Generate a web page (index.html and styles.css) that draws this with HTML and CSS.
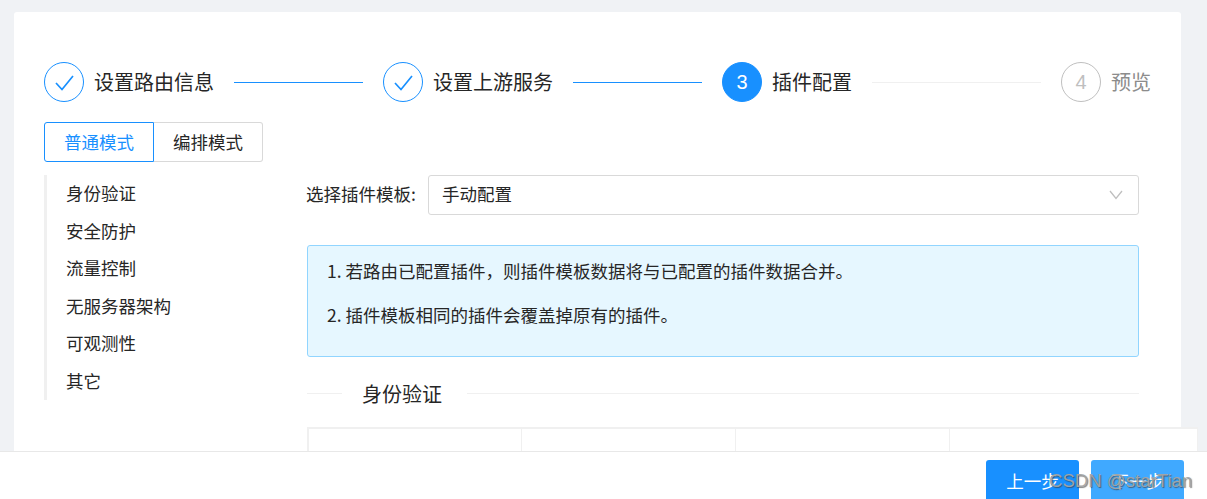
FILE: index.html
```html
<!DOCTYPE html>
<html lang="zh-CN">
<head>
  <meta charset="UTF-8">
  <title>插件配置</title>
  <link rel="stylesheet" href="styles.css">
</head>
<body>
  <div class="card">
    <div class="steps">
      <div class="step">
        <span class="step-icon">
          <svg width="38" height="38" viewBox="0 0 38 38"><path d="M11 20 L17 26.5 L28 13" fill="none" stroke="#1890ff" stroke-width="1.7"/></svg>
        </span>
        <span class="step-title">设置路由信息</span>
        <span class="step-line done"></span>
      </div>
      <div class="step">
        <span class="step-icon">
          <svg width="38" height="38" viewBox="0 0 38 38"><path d="M11 20 L17 26.5 L28 13" fill="none" stroke="#1890ff" stroke-width="1.7"/></svg>
        </span>
        <span class="step-title">设置上游服务</span>
        <span class="step-line done"></span>
      </div>
      <div class="step">
        <span class="step-icon current">3</span>
        <span class="step-title">插件配置</span>
        <span class="step-line"></span>
      </div>
      <div class="step last">
        <span class="step-icon todo">4</span>
        <span class="step-title muted">预览</span>
      </div>
    </div>

    <div class="mode-switch">
      <button class="mode-btn active">普通模式</button>
      <button class="mode-btn">编排模式</button>
    </div>

    <div class="content">
      <ul class="side-nav">
        <li>身份验证</li>
        <li>安全防护</li>
        <li>流量控制</li>
        <li>无服务器架构</li>
        <li>可观测性</li>
        <li>其它</li>
      </ul>
      <div class="main">
        <div class="form-row">
          <label class="form-label">选择插件模板:</label>
          <div class="select">
            <span>手动配置</span>
            <svg width="14" height="10" viewBox="0 0 14 10"><path d="M1 1 L7 8.5 L13 1" fill="none" stroke="#bfbfbf" stroke-width="1.3"/></svg>
          </div>
        </div>
        <div class="alert">
          <ol>
            <li>若路由已配置插件&#xFF0C;则插件模板数据将与已配置的插件数据合并。</li>
            <li>插件模板相同的插件会覆盖掉原有的插件。</li>
          </ol>
        </div>
        <div class="divider"><span>身份验证</span></div>
        <div class="plugin-grid">
          <div class="plugin-cell"></div>
          <div class="plugin-cell"></div>
          <div class="plugin-cell"></div>
          <div class="plugin-cell"></div>
        </div>
      </div>
    </div>
  </div>

  <div class="footer">
    <button class="footer-btn">上一步</button>
    <button class="footer-btn light">下一步</button>
  </div>
  <div class="watermark">CSDN @starTian</div>
</body>
</html>
```

FILE: styles.css
```css
:root {
  --primary: #1890ff;
  --bg: #f0f2f5;
  --text: #262626;
  --line: #f0f0f0;
}
* { box-sizing: border-box; margin: 0; padding: 0; }
html, body { height: 499px; overflow: hidden; }
body {
  position: relative;
  background: var(--bg);
  font-family: "Noto Sans CJK SC", "Liberation Sans", sans-serif;
  font-size: 17.5px;
  color: var(--text);
  padding: 12px 26px 0 14px;
}
.card {
  background: #fff;
  border-radius: 3px;
  height: 487px;
  padding: 50px 30px 0;
}

/* steps */
.steps { display: flex; align-items: center; }
.step { flex: 1; display: flex; align-items: center; }
.step.last { flex: none; }
.step-icon {
  width: 40px;
  height: 40px;
  flex: none;
  border: 1px solid var(--primary);
  border-radius: 50%;
  display: flex;
  align-items: center;
  justify-content: center;
  font-family: "Liberation Sans", sans-serif;
  font-size: 20px;
}
.step-icon.current { background: var(--primary); color: #fff; }
.step-icon.todo { border-color: #bfbfbf; color: #bfbfbf; }
.step-title { margin-left: 10px; font-size: 20px; line-height: 40px; white-space: nowrap; }
.step-title.muted { color: #8c8c8c; }
.step-line { flex: 1; height: 1px; margin: 0 20px; background: var(--line); }
.step-line.done { background: var(--primary); }

/* mode switch */
.mode-switch { display: flex; margin-top: 20px; }
.mode-btn {
  width: 109px;
  height: 40px;
  background: #fff;
  border: 1px solid #d9d9d9;
  border-left: none;
  border-radius: 0 3px 3px 0;
  font: inherit;
  color: var(--text);
  padding-bottom: 2px;
}
.mode-btn.active {
  width: 110px;
  border: 1px solid var(--primary);
  border-radius: 3px 0 0 3px;
  color: var(--primary);
}

/* content */
.content { display: flex; margin-top: 13px; }
.side-nav {
  width: 263px;
  flex: none;
  height: 225px;
  list-style: none;
  position: relative;
  padding-left: 22px;
}
.side-nav::before {
  content: "";
  position: absolute;
  left: 0;
  top: 0;
  bottom: 0;
  width: 3px;
  background: var(--line);
}
.side-nav li { height: 37.5px; line-height: 35.5px; }
.main { width: 832px; flex: none; }
.form-row { display: flex; align-items: center; margin-left: -1px; }
.form-label { width: 122px; flex: none; line-height: 38px; height: 40px; }
.select {
  flex: 1;
  height: 40px;
  border: 1px solid #d9d9d9;
  border-radius: 3px;
  padding: 0 15px 0 14px;
  display: flex;
  align-items: center;
  justify-content: space-between;
}
.select span { line-height: 36px; height: 38px; margin-left: -1px; }
.alert {
  margin-top: 30px;
  height: 112px;
  padding: 12px 19px 0;
  background: #e6f7ff;
  border: 1px solid #91d5ff;
  border-radius: 3px;
  line-height: 26px;
}
.alert ol { list-style-position: inside; }
.alert li { margin-bottom: 18px; }
.divider { display: flex; align-items: center; margin-top: 21px; height: 30px; font-size: 20px; }
.divider::before { content: ""; width: 35px; height: 1px; background: var(--line); }
.divider::after { content: ""; flex: 1; height: 1px; background: var(--line); }
.divider span { padding: 0 25px 0 20px; }
.plugin-grid {
  display: grid;
  grid-template-columns: 215px 214px 214px 248px;
  width: 891px;
  margin-top: 19px;
}
.plugin-cell {
  height: 60px;
  background: #fff;
  border: 1px solid var(--line);
  border-left-width: 0;
  border-top-width: 2px;
}
.plugin-cell:first-child { border-left-width: 2px; }

/* footer sits over the card */
.footer {
  position: absolute;
  left: 0;
  right: 0;
  bottom: 0;
  height: 48px;
  background: #fff;
  border-top: 1px solid #e8e8e8;
  display: flex;
  justify-content: flex-end;
  align-items: flex-start;
  gap: 12px;
  padding: 8px 23px 0 0;
}
.footer-btn {
  width: 93px;
  height: 39px;
  padding-top: 1px;
  background: var(--primary);
  color: #fff;
  border: none;
  border-radius: 3px 3px 0 0;
  font: inherit;
  font-size: 17.5px;
}
.footer-btn.light { background: #40a9ff; }
.watermark {
  position: absolute;
  left: 1049px;
  top: 469px;
  font-family: "Liberation Sans", sans-serif;
  font-size: 18.6px;
  line-height: 24px;
  color: rgba(165, 165, 165, .95);
  text-shadow: 1px 1px 1px rgba(60, 60, 60, .65);
  white-space: nowrap;
}
```
